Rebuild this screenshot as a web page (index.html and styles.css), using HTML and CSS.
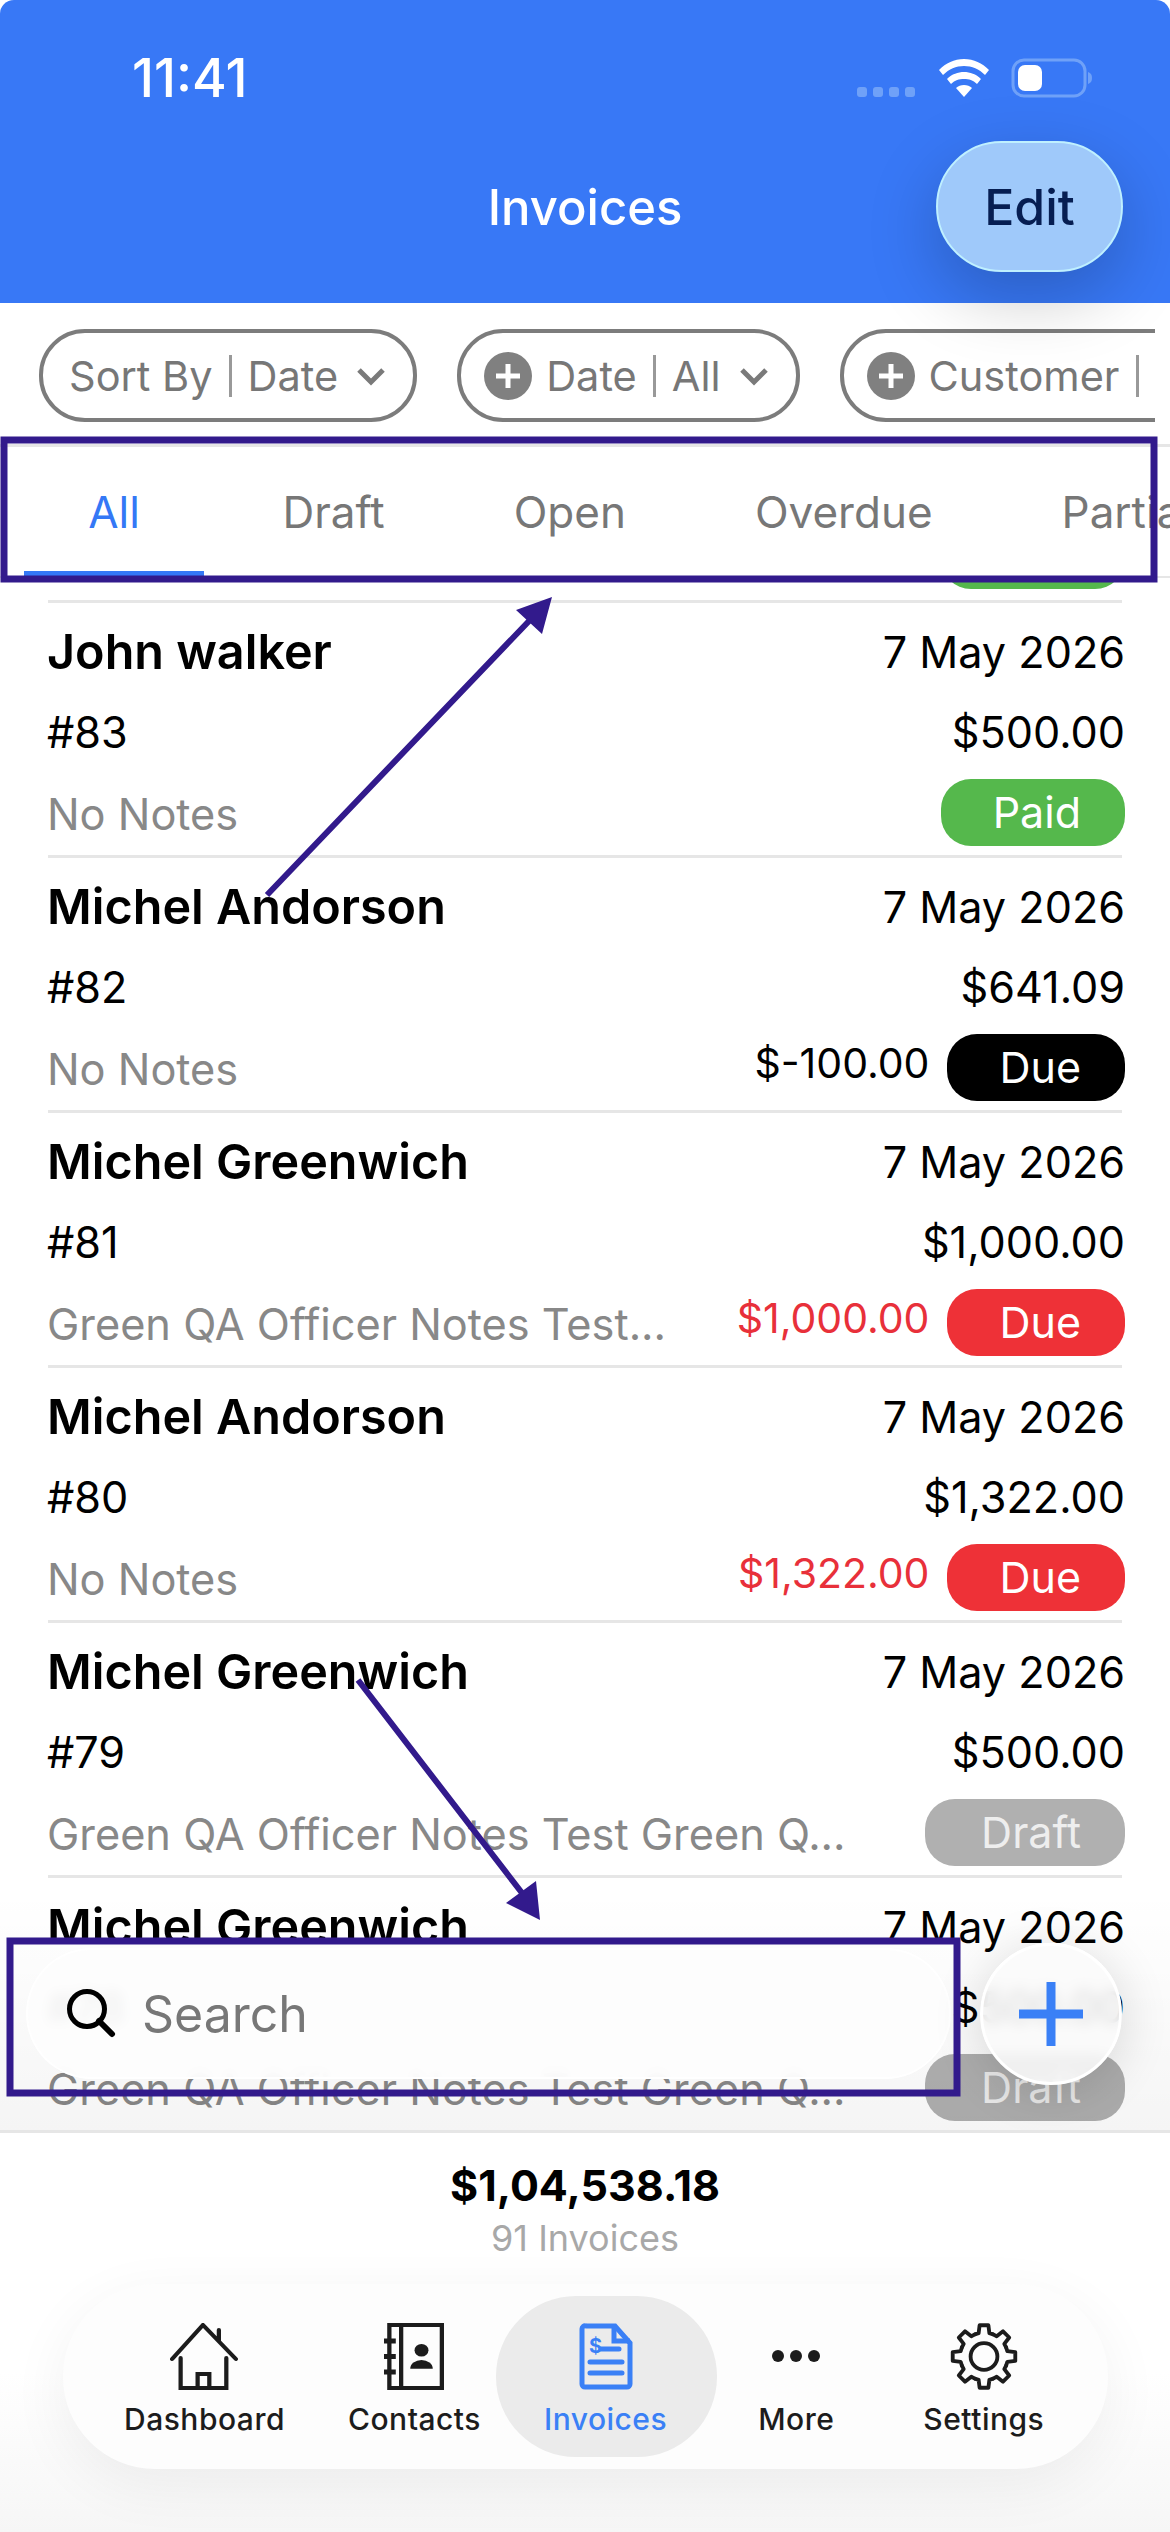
FILE: index.html
```html
<!DOCTYPE html>
<html lang="en">
<head>
    <meta charset="UTF-8">
    <meta name="viewport" content="width=device-width, initial-scale=1.0">
    <title>Invoices</title>
    <link rel="stylesheet" href="styles.css">
</head>
<body>
    <div class="screen">
        <div class="header">
            <div class="status">
                <span class="time">11:41</span>
                <div class="status-icons">
                    <div class="signal"><i></i><i></i><i></i><i></i></div>
                    <svg class="wifi" width="52" height="40" viewBox="0 0 52 40" fill="#fff">
                        <path d="M26 1C16 1 8 5 1 12l4 5c6-6 13-9 21-9s15 3 21 9l4-5C44 5 36 1 26 1z"/>
                        <path d="M26 14c-6 0-12 2-17 7l4 5c4-4 8-5 13-5s9 1 13 5l4-5c-5-5-11-7-17-7z"/>
                        <path d="M26 27c-3 0-6 1-8 3l8 9 8-9c-2-2-5-3-8-3z"/>
                    </svg>
                    <svg class="battery" width="82" height="40" viewBox="0 0 82 40">
                        <rect x="2" y="2" width="72" height="36" rx="11" fill="none" stroke="#6fa1f8" stroke-width="3"/>
                        <rect x="7" y="7" width="24" height="26" rx="7" fill="#fff"/>
                        <path d="M77 14c3 1 4 3 4 6s-1 5-4 6z" fill="#6fa1f8"/>
                    </svg>
                </div>
            </div>
            <div class="title-bar">
                <h1>Invoices</h1>
                <button class="edit-btn">Edit</button>
            </div>
        </div>

        <div class="chips">
            <div class="chip">
                <span>Sort By</span><b class="sep"></b><span>Date</span>
                <svg class="chev" width="30" height="20" viewBox="0 0 30 20"><path d="M3 4l12 12L27 4" fill="none" stroke="#7a7a7a" stroke-width="5"/></svg>
            </div>
            <div class="chip chip-plus">
                <svg class="plus" width="48" height="48" viewBox="0 0 48 48"><circle cx="24" cy="24" r="24" fill="#808080"/><path d="M24 12v24M12 24h24" stroke="#fff" stroke-width="5"/></svg>
                <span>Date</span><b class="sep"></b><span>All</span>
                <svg class="chev" width="30" height="20" viewBox="0 0 30 20"><path d="M3 4l12 12L27 4" fill="none" stroke="#7a7a7a" stroke-width="5"/></svg>
            </div>
            <div class="chip chip-plus">
                <svg class="plus" width="48" height="48" viewBox="0 0 48 48"><circle cx="24" cy="24" r="24" fill="#808080"/><path d="M24 12v24M12 24h24" stroke="#fff" stroke-width="5"/></svg>
                <span>Customer</span><b class="sep"></b><span>All</span>
            </div>
        </div>

        <div class="tabs">
            <div class="tab active">All</div>
            <div class="tab">Draft</div>
            <div class="tab">Open</div>
            <div class="tab">Overdue</div>
            <div class="tab">Partial</div>
        </div>

        <div class="list">
            <div class="row row-cut"><span class="pill paid pill-cut"></span></div>
            <div class="row">
                <div class="line"><span class="name">John walker</span><span>7 May 2026</span></div>
                <div class="line"><span>#83</span><span>$500.00</span></div>
                <div class="line"><span class="notes">No Notes</span><span class="pill paid">Paid</span></div>
            </div>
            <div class="row">
                <div class="line"><span class="name">Michel Andorson</span><span>7 May 2026</span></div>
                <div class="line"><span>#82</span><span>$641.09</span></div>
                <div class="line"><span class="notes">No Notes</span><span class="due-wrap"><span class="balance">$-100.00</span><span class="pill due-black">Due</span></span></div>
            </div>
            <div class="row">
                <div class="line"><span class="name">Michel Greenwich</span><span>7 May 2026</span></div>
                <div class="line"><span>#81</span><span>$1,000.00</span></div>
                <div class="line"><span class="notes">Green QA Officer Notes Test...</span><span class="due-wrap"><span class="balance red">$1,000.00</span><span class="pill due-red">Due</span></span></div>
            </div>
            <div class="row">
                <div class="line"><span class="name">Michel Andorson</span><span>7 May 2026</span></div>
                <div class="line"><span>#80</span><span>$1,322.00</span></div>
                <div class="line"><span class="notes">No Notes</span><span class="due-wrap"><span class="balance red">$1,322.00</span><span class="pill due-red">Due</span></span></div>
            </div>
            <div class="row">
                <div class="line"><span class="name">Michel Greenwich</span><span>7 May 2026</span></div>
                <div class="line"><span>#79</span><span>$500.00</span></div>
                <div class="line"><span class="notes">Green QA Officer Notes Test Green Q...</span><span class="pill draft">Draft</span></div>
            </div>
            <div class="row">
                <div class="line"><span class="name">Michel Greenwich</span><span>7 May 2026</span></div>
                <div class="line"><span>#78</span><span>$500.00</span></div>
                <div class="line"><span class="notes">Green QA Officer Notes Test Green Q...</span><span class="pill draft">Draft</span></div>
            </div>

            <div class="search-bar">
                <svg width="50" height="50" viewBox="0 0 50 50"><circle cx="21" cy="20" r="17.5" fill="none" stroke="#000" stroke-width="5"/><path d="M33 32l13 13" stroke="#000" stroke-width="6" stroke-linecap="round"/></svg>
                <span>Search</span>
            </div>
            <div class="add-btn">
                <svg width="64" height="64" viewBox="0 0 64 64"><path d="M32 0v64M0 32h64" stroke="#3a80f6" stroke-width="9"/></svg>
            </div>
        </div>

        <div class="footer">
            <div class="total">$1,04,538.18</div>
            <div class="count">91 Invoices</div>
            <div class="nav">
                <div class="nav-item">
                    <svg width="68" height="67" viewBox="0 0 64 67" preserveAspectRatio="none" fill="none" stroke="#1c1c1c" stroke-width="4" stroke-linecap="round">
                        <path d="M2 36L31 2l31 34M46 7v11M10 35v30h43V35M26 65V51h11v14"/>
                    </svg>
                    <span>Dashboard</span>
                </div>
                <div class="nav-item">
                    <svg width="60" height="67" viewBox="0 0 56 69" preserveAspectRatio="none" fill="#1c1c1c">
                        <path d="M5 2h49v65H5z" fill="none" stroke="#1c1c1c" stroke-width="4"/>
                        <path d="M16 2v65" stroke="#1c1c1c" stroke-width="4"/>
                        <path d="M0 16h11v5H0zM0 32h11v5H0zM0 48h11v5H0z"/>
                        <circle cx="35" cy="28" r="6.5"/>
                        <path d="M24.500 47a10.500 9 0 0 1 21 0z"/>
                    </svg>
                    <span>Contacts</span>
                </div>
                <div class="nav-item active">
                    <svg width="54" height="67" viewBox="0 0 54 67" fill="none" stroke="#3a80f6">
                        <path d="M7 3h29l15 17v41a3 3 0 0 1-3 3H6a3 3 0 0 1-3-3V6a3 3 0 0 1 4-3z" stroke-width="5"/>
                        <path d="M35 3v15h16" stroke-width="5"/>
                        <text x="10" y="30" class="dollar">$</text>
                        <path d="M22 26h18M11 39h32M11 50h32" stroke-width="5" stroke-linecap="round"/>
                    </svg>
                    <span>Invoices</span>
                </div>
                <div class="nav-item">
                    <svg width="48" height="67" viewBox="0 0 48 67" fill="#1c1c1c">
                        <circle cx="6" cy="33" r="6"/><circle cx="24" cy="33" r="6"/><circle cx="42" cy="33" r="6"/>
                    </svg>
                    <span>More</span>
                </div>
                <div class="nav-item nav-last">
                    <svg width="70" height="67" viewBox="0 0 70 70" fill="none" stroke="#1c1c1c" stroke-width="4" stroke-linejoin="round" stroke-linecap="round">
                        <defs><path id="tooth" d="M25.430 11.900l3.950-1.260 1.030-8.320h9.180l1.030 8.320 3.950 1.260"/></defs>
                        <use href="#tooth"/>
                        <use href="#tooth" transform="rotate(45 35 35)"/>
                        <use href="#tooth" transform="rotate(90 35 35)"/>
                        <use href="#tooth" transform="rotate(135 35 35)"/>
                        <use href="#tooth" transform="rotate(180 35 35)"/>
                        <use href="#tooth" transform="rotate(225 35 35)"/>
                        <use href="#tooth" transform="rotate(270 35 35)"/>
                        <use href="#tooth" transform="rotate(315 35 35)"/>
                        <circle cx="35" cy="35" r="14"/>
                    </svg>
                    <span>Settings</span>
                </div>
            </div>
        </div>

        <!-- review marks drawn on top of the screenshot -->
        <svg class="marks" width="1170" height="2532" viewBox="0 0 1170 2532" fill="none" stroke="#321a8c">
            <rect x="4" y="440" width="1150" height="139" stroke-width="7"/>
            <rect x="10" y="1941" width="947" height="152" stroke-width="7"/>
            <path d="M267 895L530 620M358 1680l164 213" stroke-width="6"/>
            <path d="M552 597l-36 13 26 24zM540 1920l-34-17 30-22z" fill="#321a8c" stroke="none"/>
        </svg>
    </div>
</body>
</html>
```

FILE: styles.css
```css
* {
    margin: 0;
    padding: 0;
    box-sizing: border-box;
}

body {
    font-family: 'Inter', 'Liberation Sans', sans-serif;
    background-color: #fff;
}

.screen {
    position: relative;
    width: 1170px;
    height: 2532px;
    display: flex;
    flex-direction: column;
    overflow: hidden;
    color: #000;
}

.header {
    position: relative;
    z-index: 3;
    height: 303px;
    padding: 52px 48px 0 0;
    background-color: #3878f6;
    border-radius: 14px 14px 0 0;
    color: #fff;
}

.status {
    display: flex;
    justify-content: space-between;
    align-items: center;
    height: 52px;
    padding-left: 132px;
}

.time {
    font-size: 53px;
    font-weight: 500;
}

.status-icons {
    display: flex;
    align-items: center;
    gap: 21px;
    margin-right: 29px;
}

.signal {
    display: flex;
    gap: 6px;
    margin-top: 28px;
    margin-right: 2px;
}

.signal i {
    width: 10px;
    height: 10px;
    border-radius: 3px;
    background-color: #6fa1f8;
}

.title-bar {
    position: relative;
    display: flex;
    justify-content: flex-end;
    margin-top: 37px;
}

.title-bar h1 {
    position: absolute;
    left: 0;
    right: -48px;
    top: 37px;
    text-align: center;
    font-size: 49px;
    font-weight: 500;
}

.edit-btn {
    width: 187px;
    height: 131px;
    margin-right: -1px;
    border: 2px solid #bff0ff;
    border-radius: 66px;
    background-color: #9fc9fa;
    color: #061e52;
    font-family: inherit;
    font-size: 50px;
    font-weight: 500;
    box-shadow: 0 24px 70px rgba(0, 0, 0, .22);
}

.chips {
    display: flex;
    gap: 40px;
    width: 1155px;
    padding: 26px 0 22px 39px;
    overflow: hidden;
}

.chip {
    flex: none;
    display: flex;
    align-items: center;
    height: 93px;
    padding: 0 27px 0 26px;
    border: 4px solid #7c7c7c;
    border-radius: 46px;
    color: #777;
    font-size: 41.5px;
    white-space: nowrap;
}

.chip-plus {
    padding-left: 23px;
}

.chip .plus {
    margin-right: 14px;
}

.sep {
    width: 3px;
    height: 42px;
    margin: 0 16px;
    background-color: #999;
}

.chev {
    margin-left: 18px;
}

.tabs {
    position: relative;
    z-index: 2;
    display: flex;
    height: 134px;
    border-top: 3px solid #e6e6e6;
    border-bottom: 2px solid #e6e6e6;
    background-color: #fff;
    padding-left: 24px;
    white-space: nowrap;
    color: #777;
    font-size: 44px;
}

.tab {
    flex: none;
    padding: 38px 64.5px 0;
}

.tab.active {
    margin-right: 14px;
    padding: 38px 0 0;
    width: 180px;
    text-align: center;
    color: #3478f6;
    border-bottom: 5px solid #3478f6;
}

.list {
    position: relative;
    flex: 1;
    min-height: 0;
    overflow: hidden;
}

.list::after {
    content: "";
    position: absolute;
    left: 0;
    right: 0;
    bottom: 0;
    height: 240px;
    background: linear-gradient(rgba(0, 0, 0, 0), rgba(0, 0, 0, .04));
}

.row {
    height: 255px;
    margin: 0 48px;
    padding-top: 9px;
    border-bottom: 3px solid #e6e6e6;
    font-size: 43.2px;
}

/* previous row, scrolled almost out of view under the tabs */
.row-cut {
    display: flex;
    justify-content: flex-end;
    align-items: flex-end;
    height: 25px;
    padding: 0;
}

.line {
    display: flex;
    justify-content: space-between;
    align-items: center;
    height: 80px;
    margin: 0 -3px 0 -1px;
    white-space: nowrap;
}

.name {
    margin-top: -2px;
    font-size: 48.5px;
    font-weight: 600;
}

.notes {
    margin-top: 4px;
    font-size: 43.3px;
    color: #888;
}

.due-wrap {
    display: flex;
    align-items: center;
    gap: 18px;
}

.balance {
    margin-top: -9px;
    font-size: 41px;
}

.red {
    color: #e8303a;
}

.pill {
    height: 67px;
    padding: 0 44px 0 52px;
    border-radius: 30px;
    color: #fff;
    font-size: 43px;
    line-height: 66px;
}

.pill-cut {
    flex: none;
    width: 184px;
    margin: 0 -3px 11px 0;
}

.paid {
    background-color: #55b84c;
}

.due-black {
    background-color: #000;
}

.due-red {
    background-color: #ee3137;
}

.draft {
    padding-left: 56px;
    background-color: #b0b0b0;
    color: #eee;
}

.search-bar {
    position: absolute;
    z-index: 1;
    left: 26px;
    bottom: 51px;
    width: 925px;
    height: 131px;
    display: flex;
    align-items: center;
    gap: 26px;
    padding-left: 38px;
    border: 2px solid rgba(255, 255, 255, .9);
    border-radius: 66px;
    background-color: rgba(253, 253, 253, .94);
    backdrop-filter: blur(6px);
    color: #777;
    font-size: 50px;
}

.add-btn {
    position: absolute;
    z-index: 1;
    left: 980px;
    bottom: 45px;
    width: 142px;
    height: 142px;
    display: flex;
    align-items: center;
    justify-content: center;
    border: 3px solid #fff;
    border-radius: 50%;
    background-color: rgba(250, 250, 250, .86);
    backdrop-filter: blur(7px);
    box-shadow: 0 6px 50px rgba(0, 0, 0, .14);
}

.footer {
    flex: none;
    height: 402px;
    padding-top: 26px;
    border-top: 3px solid #e6e6e6;
    background: linear-gradient(#fff, #fff 60%, #f6f6f6);
    text-align: center;
}

.total {
    font-size: 43px;
    font-weight: 700;
}

.count {
    margin-top: 5px;
    font-size: 36px;
    color: #a8a8a8;
}

.nav {
    display: flex;
    gap: 63px;
    height: 185px;
    margin: 24px 62px 0 63px;
    padding: 12px 0 0 61px;
    border-radius: 92px;
    background-color: #fdfdfd;
    box-shadow: 0 16px 60px rgba(0, 0, 0, .06);
    color: #1c1c1c;
    font-size: 30px;
    font-weight: 500;
    letter-spacing: .5px;
}

.nav-item {
    display: flex;
    flex-direction: column;
    align-items: center;
    gap: 11px;
    height: 161px;
    padding-top: 27px;
}

.nav-item.active {
    margin: 0 -22px 0 -48px;
    padding: 27px 50px 0 48px;
    border-radius: 80px;
    background-color: #ebebeb;
    color: #3a80f6;
}

.nav-last {
    margin-left: 26px;
}

.dollar {
    fill: #3a80f6;
    stroke: none;
    font-size: 20px;
    font-weight: 700;
}

.marks {
    position: absolute;
    z-index: 4;
    left: 0;
    top: 0;
    pointer-events: none;
}
```
